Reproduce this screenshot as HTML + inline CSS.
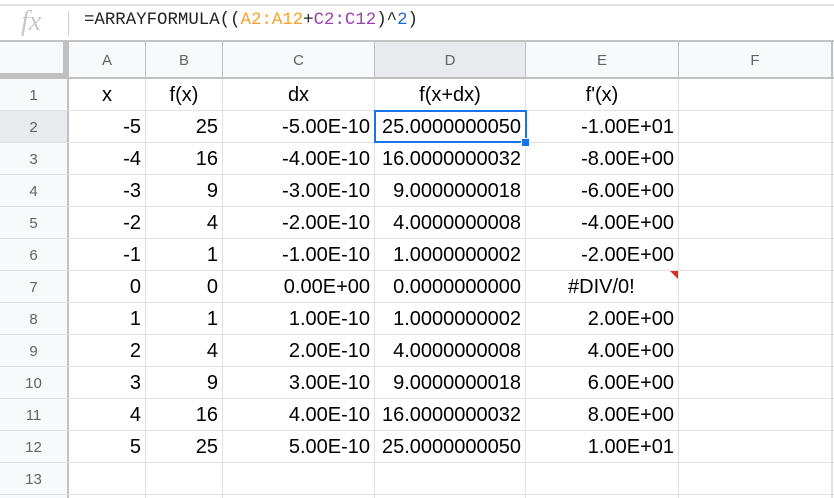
<!DOCTYPE html>
<html><head><meta charset="utf-8"><style>
*{margin:0;padding:0;box-sizing:border-box}
body{width:834px;height:498px;overflow:hidden;background:#fff;font-family:"Liberation Sans",Arial,sans-serif;position:relative}
.a{position:absolute}
.hl{position:absolute;height:1px;background:#e2e2e2}
.vl{position:absolute;width:1px;background:#e2e2e2}
.c{position:absolute;height:31px;line-height:33px;font-size:20px;color:#000;white-space:nowrap;padding:0 4px}
.r{text-align:right}.m{text-align:center}
.ch{position:absolute;top:42px;height:35px;line-height:37px;text-align:center;font-size:15px;color:#5f6368}
.rh{position:absolute;left:0;width:67px;height:31px;line-height:33px;text-align:center;font-size:15px;color:#5f6368}
</style></head><body>
<div class="a" style="left:0;top:4px;width:834px;height:2px;background:#e3e3e3"></div>
<div class="a" style="left:21px;top:6px;font-family:'Liberation Serif',serif;font-style:italic;font-size:28px;color:#c8c8c8">fx</div>
<div class="a" style="left:68px;top:11px;width:1px;height:25px;background:#d0d0d0"></div>
<div class="a" style="left:84px;top:11px;font-family:'Liberation Mono',monospace;font-size:17.4px;color:#222">=ARRAYFORMULA((<span style="color:#f7a32b">A2:A12</span>+<span style="color:#9c3fb0">C2:C12</span>)^<span style="color:#1a66d6">2</span>)</div>
<div class="a" style="left:0;top:40px;width:834px;height:2px;background:#c4c4c4"></div>
<div class="a" style="left:0;top:42px;width:834px;height:36px;background:#f8f9fa"></div>
<div class="a" style="left:0;top:78px;width:68px;height:420px;background:#f8f9fa"></div>
<div class="a" style="left:375px;top:42px;width:150px;height:35px;background:#e8eaed"></div>
<div class="a" style="left:0;top:111px;width:67px;height:31px;background:#e8eaed"></div>
<div class="a" style="left:63px;top:42px;width:5px;height:36px;background:#c0c0c0"></div>
<div class="a" style="left:0;top:73px;width:68px;height:5px;background:#c0c0c0"></div>
<div class="a" style="left:0;top:77px;width:834px;height:2px;background:#c0c0c0"></div>
<div class="a" style="left:67px;top:42px;width:2px;height:456px;background:#c0c0c0"></div>
<div class="a" style="left:145px;top:42px;width:1px;height:36px;background:#c0c0c0"></div>
<div class="a" style="left:222px;top:42px;width:1px;height:36px;background:#c0c0c0"></div>
<div class="a" style="left:374px;top:42px;width:1px;height:36px;background:#c0c0c0"></div>
<div class="a" style="left:525px;top:42px;width:1px;height:36px;background:#c0c0c0"></div>
<div class="a" style="left:678px;top:42px;width:1px;height:36px;background:#c0c0c0"></div>
<div class="a" style="left:831px;top:42px;width:2px;height:36px;background:#c0c0c0"></div>
<div class="ch" style="left:69px;width:76px">A</div>
<div class="ch" style="left:146px;width:76px">B</div>
<div class="ch" style="left:223px;width:151px">C</div>
<div class="ch" style="left:375px;width:150px">D</div>
<div class="ch" style="left:526px;width:152px">E</div>
<div class="ch" style="left:679px;width:152px">F</div>
<div class="vl" style="left:145px;top:79px;height:419px"></div>
<div class="vl" style="left:222px;top:79px;height:419px"></div>
<div class="vl" style="left:374px;top:79px;height:419px"></div>
<div class="vl" style="left:525px;top:79px;height:419px"></div>
<div class="vl" style="left:678px;top:79px;height:419px"></div>
<div class="vl" style="left:831px;top:79px;height:419px;width:2px"></div>
<div id="g"></div>
<script>
var h='';
for(var k=1;k<=13;k++){var y=78+32*k;h+='<div class="hl" style="left:0;top:'+y+'px;width:834px"></div>';}
var A=[-5,-4,-3,-2,-1,0,1,2,3,4,5];
var D=["25.0000000050","16.0000000032","9.0000000018","4.0000000008","1.0000000002","0.0000000000","1.0000000002","4.0000000008","9.0000000018","16.0000000032","25.0000000050"];
var E=["-1.00E+01","-8.00E+00","-6.00E+00","-4.00E+00","-2.00E+00","#DIV/0!","2.00E+00","4.00E+00","6.00E+00","8.00E+00","1.00E+01"];
function C(a){return (a==0?"0.00E+00":(a<0?"-":"")+Math.abs(a)+".00E-10");}
for(var r=1;r<=13;r++){var t=79+32*(r-1);
h+='<div class="rh" style="top:'+t+'px">'+r+'</div>';
if(r==1){var L=[[69,76,'x'],[146,76,'f(x)'],[223,151,'dx'],[375,150,'f(x+dx)'],[526,152,"f'(x)"]];
L.forEach(function(q){h+='<div class="c m" style="top:'+t+'px;left:'+q[0]+'px;width:'+q[1]+'px">'+q[2]+'</div>';});}
else if(r<=12){var i=r-2,a=A[i];
h+='<div class="c r" style="top:'+t+'px;left:69px;width:76px">'+a+'</div>';
h+='<div class="c r" style="top:'+t+'px;left:146px;width:76px">'+(a*a)+'</div>';
h+='<div class="c r" style="top:'+t+'px;left:223px;width:151px">'+C(a)+'</div>';
h+='<div class="c r" style="top:'+t+'px;left:375px;width:150px">'+D[i]+'</div>';
if(E[i]=="#DIV/0!")h+='<div class="c" style="top:'+t+'px;left:564px;width:100px">#DIV/0!</div>';
else h+='<div class="c r" style="top:'+t+'px;left:526px;width:152px">'+E[i]+'</div>';}}
document.getElementById('g').innerHTML=h;
</script>
<div class="a" style="left:374px;top:110px;width:153px;height:33px;border:2px solid #1a73e8"></div>
<div class="a" style="left:521px;top:138px;width:9px;height:9px;background:#1a73e8;border:1px solid #fff"></div>
<div class="a" style="left:670px;top:271px;width:0;height:0;border-top:8px solid #d93025;border-left:8px solid transparent"></div>
</body></html>
